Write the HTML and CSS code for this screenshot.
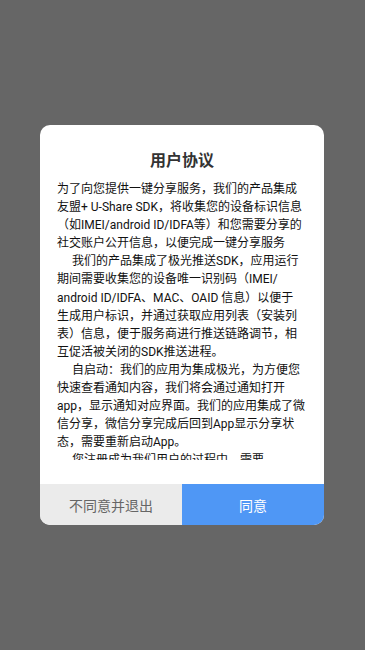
FILE: index.html
```html
<!DOCTYPE html>
<html lang="zh-CN">
<head>
<meta charset="utf-8">
<meta name="viewport" content="width=device-width, initial-scale=1">
<title>用户协议</title>
<link rel="stylesheet" href="styles.css">
</head>
<body>
<div class="mask">
  <div class="dialog">
    <h1 class="title">用户协议</h1>
    <div class="content">
      <p class="para">为了向您提供一键分享服务，我们的产品集成<br>友盟+ U-Share SDK，将收集您的设备标识信息<br>（如IMEI/android ID/IDFA等）和您需要分享的<br>社交账户公开信息，以便完成一键分享服务</p>
      <p class="para indent">我们的产品集成了极光推送SDK，应用运行<br>期间需要收集您的设备唯一识别码（IMEI/<br>android ID/IDFA、MAC、OAID 信息）以便于<br>生成用户标识，并通过获取应用列表（安装列<br>表）信息，便于服务商进行推送链路调节，相<br>互促活被关闭的SDK推送进程。</p>
      <p class="para indent">自启动：我们的应用为集成极光，为方便您<br>快速查看通知内容，我们将会通过通知打开<br>app，显示通知对应界面。我们的应用集成了微<br>信分享，微信分享完成后回到App显示分享状<br>态，需要重新启动App。</p>
      <p class="para indent">您注册成为我们用户的过程中，需要<br>提供您的手机号码等信息。</p>
    </div>
    <div class="actions">
      <button class="btn btn-cancel">不同意并退出</button>
      <button class="btn btn-ok">同意</button>
    </div>
  </div>
</div>
</body>
</html>
```
FILE: styles.css
```css
* { box-sizing: border-box; }
html, body {
  margin: 0;
  padding: 0;
}
body {
  background: #666666;
  font-family: Roboto, "Noto Sans CJK SC", sans-serif;
}
.mask {
  min-height: 100vh;
  display: flex;
  align-items: center;
  justify-content: center;
  padding-left: 40px;
  padding-right: 41px;
}
.dialog {
  width: 284px;
  height: 400px;
  background: #ffffff;
  border-radius: 10px;
  overflow: hidden;
  display: flex;
  flex-direction: column;
}
.title {
  margin: 25px 0 0;
  font-size: 16px;
  line-height: 22px;
  font-weight: bold;
  color: #333333;
  text-align: center;
}
.content {
  margin: 8px 0 0;
  padding: 0 6px 0 17px;
  height: 280px;
  overflow: hidden;
  font-size: 12px;
  line-height: 18.1px;
  color: #111111;
}
.para {
  margin: 0;
  white-space: nowrap;
}
.indent {
  text-indent: 15px;
}
.actions {
  margin-top: auto;
  display: flex;
  height: 41px;
}
.btn {
  flex: 1;
  border: none;
  margin: 0;
  padding: 0;
  font-family: Roboto, "Noto Sans CJK SC", sans-serif;
  font-size: 14px;
}
.btn-cancel {
  background: #ebebeb;
  color: #666666;
}
.btn-ok {
  background: #4f97f5;
  color: #ffffff;
}
```
